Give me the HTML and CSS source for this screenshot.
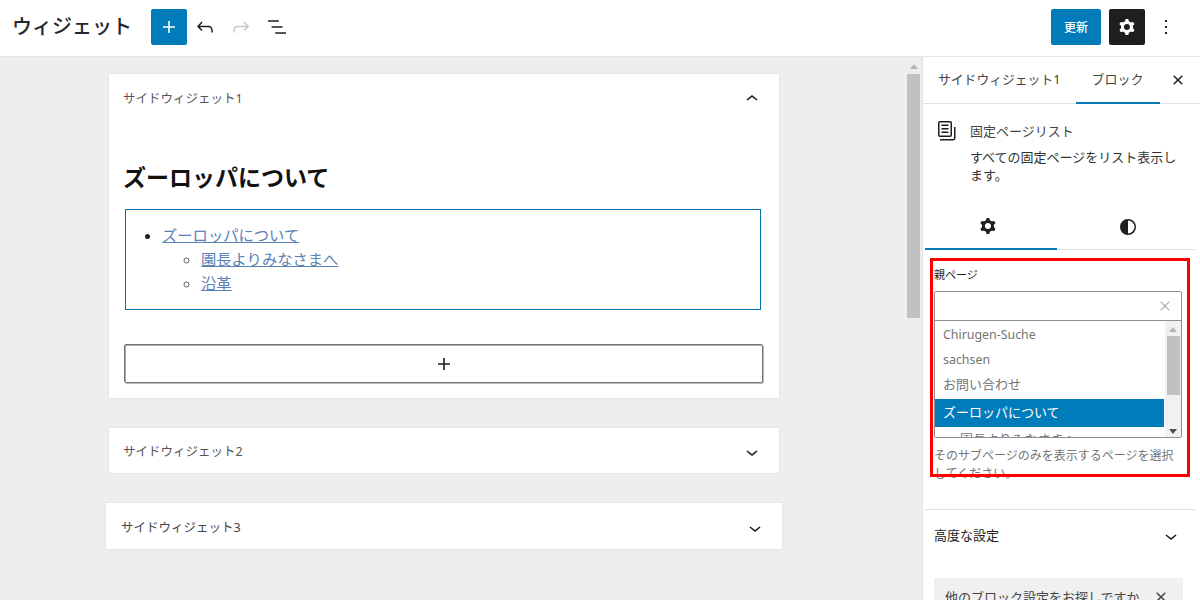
FILE: index.html
```html
<!DOCTYPE html>
<html lang="ja">
<head>
<meta charset="utf-8">
<title>ウィジェット</title>
<link rel="stylesheet" href="styles.css">
</head>
<body>
<div class="app">
  <header class="topbar">
    <h1 class="page-title">ウィジェット</h1>
    <button class="icon-btn primary"><svg viewBox="0 0 24 24" class="icon"><path d="M18 11.2h-5.2V6h-1.6v5.2H6v1.6h5.2V18h1.6v-5.2H18z"/></svg></button>
    <button class="icon-btn"><svg viewBox="0 0 24 24" class="icon"><path d="M18.3 11.7c-.6-.6-1.4-.9-2.3-.9H6.7l2.9-3.3-1.1-1-4.5 5L8.5 16l1-1-2.7-2.7H16c.5 0 .9.2 1.3.5 1 1 1 3.4 1 4.5v.3h1.5v-.2c0-1.5 0-4.3-1.5-5.7z"/></svg></button>
    <button class="icon-btn disabled"><svg viewBox="0 0 24 24" class="icon"><path d="M15.6 6.5l-1.1 1 2.9 3.3H8c-.9 0-1.7.3-2.3.9-1.4 1.5-1.4 4.2-1.4 5.6v.2h1.5v-.3c0-1.1 0-3.5 1-4.5.3-.3.7-.5 1.3-.5h9.2L14.5 15l1.1 1.1 4.6-4.6-4.6-5z"/></svg></button>
    <button class="icon-btn"><svg viewBox="0 0 24 24" class="icon"><path d="M13.8 5.2H3v1.5h10.8V5.2zm-3.6 12v1.5H21v-1.5H10.2zm7.2-6H6.6v1.5h10.8v-1.5z"/></svg></button>
    <div class="topbar-right">
      <button class="save-btn">更新</button>
      <button class="icon-btn dark"><svg viewBox="0 0 24 24" class="icon"><path fill-rule="evenodd" d="M10.289 4.836A1 1 0 0111.275 4h1.306a1 1 0 01.987.836l.244 1.466c.787.26 1.503.679 2.108 1.218l1.393-.522a1 1 0 011.216.437l.653 1.131a1 1 0 01-.23 1.273l-1.148.944a6.025 6.025 0 010 2.435l1.149.946a1 1 0 01.23 1.272l-.653 1.13a1 1 0 01-1.216.437l-1.394-.522c-.605.54-1.32.958-2.108 1.218l-.244 1.466a1 1 0 01-.987.836h-1.306a1 1 0 01-.986-.836l-.244-1.466a5.995 5.995 0 01-2.108-1.218l-1.394.522a1 1 0 01-1.217-.436l-.653-1.131a1 1 0 01.23-1.272l1.149-.946a6.026 6.026 0 010-2.435l-1.148-.944a1 1 0 01-.23-1.272l.653-1.131a1 1 0 011.217-.437l1.393.522a5.994 5.994 0 012.108-1.218l.244-1.466zM14.929 12a3 3 0 11-6 0 3 3 0 016 0z"/></svg></button>
      <button class="icon-btn"><svg viewBox="0 0 24 24" class="icon"><path d="M13 19h-2v-2h2v2zm0-6h-2v-2h2v2zm0-6h-2V5h2v2z"/></svg></button>
    </div>
  </header>

  <div class="workspace">
    <main class="canvas">
      <section class="card card-first">
        <div class="card-head head-tall">
          <span class="card-title">サイドウィジェット1</span>
          <svg viewBox="0 0 24 24" class="icon"><path d="M6.5 12.4L12 8l5.5 4.4-.9 1.2L12 10l-4.5 3.6-1-1.2z"/></svg>
        </div>
        <div class="card-body">
          <h2 class="block-heading">ズーロッパについて</h2>
          <div class="page-list">
            <ul class="tree">
              <li><a href="#">ズーロッパについて</a>
                <ul class="subtree">
                  <li><a href="#">園長よりみなさまへ</a></li>
                  <li><a href="#">沿革</a></li>
                </ul>
              </li>
            </ul>
          </div>
          <button class="appender"><svg viewBox="0 0 24 24" class="icon"><path d="M18 11.2h-5.2V6h-1.6v5.2H6v1.6h5.2V18h1.6v-5.2H18z"/></svg></button>
        </div>
      </section>
      <section class="card">
        <div class="card-head">
          <span class="card-title">サイドウィジェット2</span>
          <svg viewBox="0 0 24 24" class="icon"><path d="M17.5 11.6L12 16l-5.5-4.4.9-1.2L12 14l4.5-3.6 1 1.2z"/></svg>
        </div>
      </section>
      <section class="card card-wide">
        <div class="card-head">
          <span class="card-title">サイドウィジェット3</span>
          <svg viewBox="0 0 24 24" class="icon"><path d="M17.5 11.6L12 16l-5.5-4.4.9-1.2L12 14l4.5-3.6 1 1.2z"/></svg>
        </div>
      </section>
    </main>

    <div class="page-scroll">
      <span class="arrow-up"></span>
      <span class="page-thumb"></span>
    </div>

    <aside class="sidebar">
      <div class="side-tabs">
        <span class="side-tab">サイドウィジェット1</span>
        <span class="side-tab active">ブロック</span>
        <svg viewBox="0 0 24 24" class="icon side-close"><path d="M12 13.06l3.712 3.713 1.061-1.06L13.061 12l3.712-3.712-1.06-1.06L12 10.938 8.288 7.227l-1.061 1.06L10.939 12l-3.712 3.712 1.06 1.061L12 13.061z"/></svg>
      </div>
      <div class="block-card">
        <svg viewBox="0 0 24 24" class="icon"><path d="M14.5 5.5h-7V7h7V5.5zM7.5 9h7v1.5h-7V9zm7 3.5h-7V14h7v-1.5z"/><path d="M16 2H6a2 2 0 00-2 2v12a2 2 0 002 2h10a2 2 0 002-2V4a2 2 0 00-2-2zM6 3.5h10a.5.5 0 01.5.5v12a.5.5 0 01-.5.5H6a.5.5 0 01-.5-.5V4a.5.5 0 01.5-.5z"/><path d="M20 8v11c0 .69-.31 1-.999 1H6v1.5h13.001c1.52 0 2.499-.982 2.499-2.5V8H20z"/></svg>
        <div class="block-info">
          <div class="block-name">固定ページリスト</div>
          <p class="block-desc">すべての固定ページをリスト表示します。</p>
        </div>
      </div>
      <div class="inner">
        <div class="inspector-tabs">
          <span class="inspector-tab active"><svg viewBox="0 0 24 24" class="icon"><path fill-rule="evenodd" d="M10.289 4.836A1 1 0 0111.275 4h1.306a1 1 0 01.987.836l.244 1.466c.787.26 1.503.679 2.108 1.218l1.393-.522a1 1 0 011.216.437l.653 1.131a1 1 0 01-.23 1.273l-1.148.944a6.025 6.025 0 010 2.435l1.149.946a1 1 0 01.23 1.272l-.653 1.13a1 1 0 01-1.216.437l-1.394-.522c-.605.54-1.32.958-2.108 1.218l-.244 1.466a1 1 0 01-.987.836h-1.306a1 1 0 01-.986-.836l-.244-1.466a5.995 5.995 0 01-2.108-1.218l-1.394.522a1 1 0 01-1.217-.436l-.653-1.131a1 1 0 01.23-1.272l1.149-.946a6.026 6.026 0 010-2.435l-1.148-.944a1 1 0 01-.23-1.272l.653-1.131a1 1 0 011.217-.437l1.393.522a5.994 5.994 0 012.108-1.218l.244-1.466zM14.929 12a3 3 0 11-6 0 3 3 0 016 0z"/></svg></span>
          <span class="inspector-tab"><svg viewBox="0 0 24 24" class="icon"><path fill-rule="evenodd" d="M12 4a8 8 0 100 16 8 8 0 000-16zm0 1.5a6.5 6.5 0 010 13v-13z"/></svg></span>
        </div>
        <div class="panel">
          <div class="field-label">親ページ</div>
          <div class="combo">
            <div class="combo-input"><svg viewBox="0 0 24 24" class="combo-clear"><path d="M12 13.06l4.7 4.7 1.06-1.06-4.7-4.7 4.7-4.7-1.06-1.06-4.7 4.7-4.7-4.7-1.06 1.06 4.7 4.7-4.7 4.7 1.06 1.06z"/></svg></div>
            <div class="combo-list">
              <div class="options">
                <div class="option latin">Chirugen-Suche</div>
                <div class="option latin">sachsen</div>
                <div class="option">お問い合わせ</div>
                <div class="option selected">ズーロッパについて</div>
                <div class="option nested">園長よりみなさまへ</div>
              </div>
              <div class="list-scroll">
                <span class="arrow-up"></span>
                <span class="list-thumb"></span>
                <span class="arrow-down"></span>
              </div>
            </div>
          </div>
          <p class="help">そのサブページのみを表示するページを選択してください。</p>
          <div class="highlight"></div>
        </div>
        <div class="advanced">
          <span>高度な設定</span>
          <svg viewBox="0 0 24 24" class="icon"><path d="M17.5 11.6L12 16l-5.5-4.4.9-1.2L12 14l4.5-3.6 1 1.2z"/></svg>
        </div>
        <div class="notice">
          <span>他のブロック設定をお探しですか</span>
          <svg viewBox="0 0 24 24" class="icon"><path d="M12 13.06l3.712 3.713 1.061-1.06L13.061 12l3.712-3.712-1.06-1.06L12 10.938 8.288 7.227l-1.061 1.06L10.939 12l-3.712 3.712 1.06 1.061L12 13.061z"/></svg>
        </div>
      </div>
    </aside>
  </div>
</div>
</body>
</html>
```

FILE: styles.css
```css
* { box-sizing: border-box; }
html, body { margin: 0; height: 600px; overflow: hidden; }
body {
  font-family: "Noto Sans", "Noto Sans CJK JP", sans-serif;
  font-size: 13px;
  color: #1e1e1e;
  background: #fff;
}
.app { display: flex; flex-direction: column; height: 600px; }
.icon { width: 24px; height: 24px; fill: currentColor; display: block; flex: none; }
button { font: inherit; border: 0; background: none; padding: 0; color: inherit; }

/* top bar */
.topbar {
  display: flex;
  align-items: center;
  height: 57px;
  flex: none;
  padding: 0 16px 3px 13px;
  background: #fff;
  border-bottom: 1px solid #e6e6e6;
}
.page-title { margin: 0 18px 0 -1px; width: 121px; font-size: 20px; font-weight: 500; line-height: 28px; color: #23282d; white-space: nowrap; }
.icon-btn { width: 36px; height: 36px; display: flex; align-items: center; justify-content: center; border-radius: 2px; color: #1e1e1e; }
.icon-btn.primary { background: #007cba; color: #fff; }
.icon-btn.dark { background: #1e1e1e; color: #fff; }
.icon-btn.disabled { color: #c8c8c8; }
.topbar-right { margin-left: auto; display: flex; align-items: center; gap: 3px; }
.save-btn { width: 50px; height: 36px; margin-right: 5px; background: #007cba; color: #fff; border-radius: 2px; font-size: 12px; font-weight: 500; }

/* workspace */
.workspace { flex: 1; display: flex; min-height: 0; background: #eee; }
.canvas { width: 905px; flex: none; padding: 16px 0 0 108px; display: flex; flex-direction: column; gap: 28px; align-items: flex-start; }
.card { width: 672px; background: #fff; border: 1px solid #e6e6e6; flex: none; }
.card-wide { width: 678px; margin-left: -3px; }
.card-head { height: 45px; display: flex; align-items: center; justify-content: space-between; padding: 0 15px 0 14px; }
.card-head .icon { margin-top: 3px; }
.head-tall { height: 47px; }
.card-wide .card-head { height: 46px; padding: 0 15px 0 15px; }
.card-title { font-size: 12.5px; color: #555; }
.card-wide .card-title { color: #444; }
.card-body { padding: 0 16px 15px 15px; }
.block-heading { margin: 40px 0 16px -1px; font-size: 23px; line-height: 32px; font-weight: 700; color: #111; }
.page-list { margin-left: 1px; width: 636px; height: 101px; border: 1px solid #0073aa; padding: 13px 0 0 36px; font-size: 15.3px; line-height: 24px; }
.tree, .subtree { margin: 0; padding: 0; }
.subtree { padding-left: 39px; color: #666; }
.page-list a { color: #5b82b5; }
.appender { margin-top: 34px; display: flex; align-items: center; justify-content: center; width: 639px; height: 39px; border: 1px solid #757575; border-radius: 2px; box-shadow: inset 1px 1px 0 #aaa, 1px 1px 0 #bbb; color: #1e1e1e; background: #fff; }

/* page scrollbar */
.page-scroll { width: 17px; flex: none; padding: 7px 2px 0; display: flex; flex-direction: column; align-items: center; gap: 5px; }
.page-thumb { width: 13px; height: 244px; background: #c1c1c1; }
.arrow-up { width: 0; height: 0; border: 4px solid transparent; border-top: 0; border-bottom: 5px solid #b5b5b5; }
.arrow-down { width: 0; height: 0; border: 4px solid transparent; border-bottom: 0; border-top: 5px solid #505050; }

/* sidebar */
.sidebar { flex: 1; min-width: 0; background: #fff; border-left: 1px solid #e0e0e0; overflow: hidden; }
.side-tabs { height: 47px; display: flex; align-items: stretch; border-bottom: 1px solid #e0e0e0; }
.side-tab { display: flex; align-items: center; padding: 0 16px; color: #444; margin-bottom: -1px; padding-bottom: 5px; white-space: nowrap; }
.side-tab:first-child { padding-left: 15px; padding-right: 15px; font-size: 12.8px; }
.side-tab.active { border-bottom: 2px solid #007cba; padding-bottom: 3px; }
.side-close { align-self: center; margin: -1px 10px 0 auto; }
.block-card { display: flex; gap: 12px; padding: 15px 16px 0 11px; height: 101px; }
.block-info { min-width: 0; padding-top: 3px; }
.block-name { line-height: 18px; color: #444; }
.block-desc { margin: 8px 0 0; line-height: 18px; color: #333; }
.inner { margin: 0 5px 0 2px; }
.inspector-tabs { display: flex; height: 45px; border-bottom: 1px solid #e0e0e0; }
.inspector-tab { width: 133px; display: flex; align-items: center; justify-content: center; height: 45px; padding-bottom: 2px; }
.inspector-tab + .inspector-tab { width: 140px; padding-left: 4px; }
.inspector-tab.active { border-bottom: 2px solid #007cba; padding-right: 5px; }
.panel { position: relative; height: 259px; padding: 17px 12px 0 9px; }
.field-label { font-size: 11px; line-height: 16px; color: #1e1e1e; }
.combo { margin-top: 8px; width: 248px; height: 147px; border: 1px solid #8c8f94; border-radius: 2px; overflow: hidden; }
.combo-input { height: 29px; border-bottom: 1px solid #8c8f94; display: flex; align-items: center; justify-content: flex-end; padding-right: 6px; }
.combo-clear { width: 20px; height: 20px; fill: #b0b0b0; }
.combo-list { display: flex; height: 117px; }
.options { width: 229px; flex: none; padding-top: 1px; }
.option { height: 25px; padding-left: 8px; line-height: 25px; color: #757575; white-space: nowrap; }
.option.latin { font-size: 12.4px; }
.option.selected { height: 28px; margin-top: 2px; line-height: 27px; background: #007cba; color: #fff; }
.option.nested { padding-left: 25px; }
.list-scroll { flex: 1; background: #f1f1f1; margin-left: 1px; width: 16px; display: flex; flex-direction: column; align-items: center; padding: 6px 0 4px; gap: 4px; }
.list-thumb { width: 13px; height: 59px; background: #c1c1c1; }
.list-scroll .arrow-down { margin-top: auto; }
.help { margin: 9px 0 0; font-size: 12px; line-height: 18px; color: #757575; }
.highlight { position: absolute; left: 5px; top: 8px; width: 260px; height: 219px; border: 3px solid #f00; }
.advanced { height: 55px; border-top: 1px solid #e0e0e0; display: flex; align-items: center; justify-content: space-between; padding: 0 12px 5px 9px; }
.advanced .icon { margin-top: 3px; }
.notice { margin: 14px 12px 0 9px; background: #f0f0f0; border-radius: 2px; height: 60px; display: flex; justify-content: space-between; padding: 7px 10px 0 11px; color: #444; line-height: 24px; }
```
